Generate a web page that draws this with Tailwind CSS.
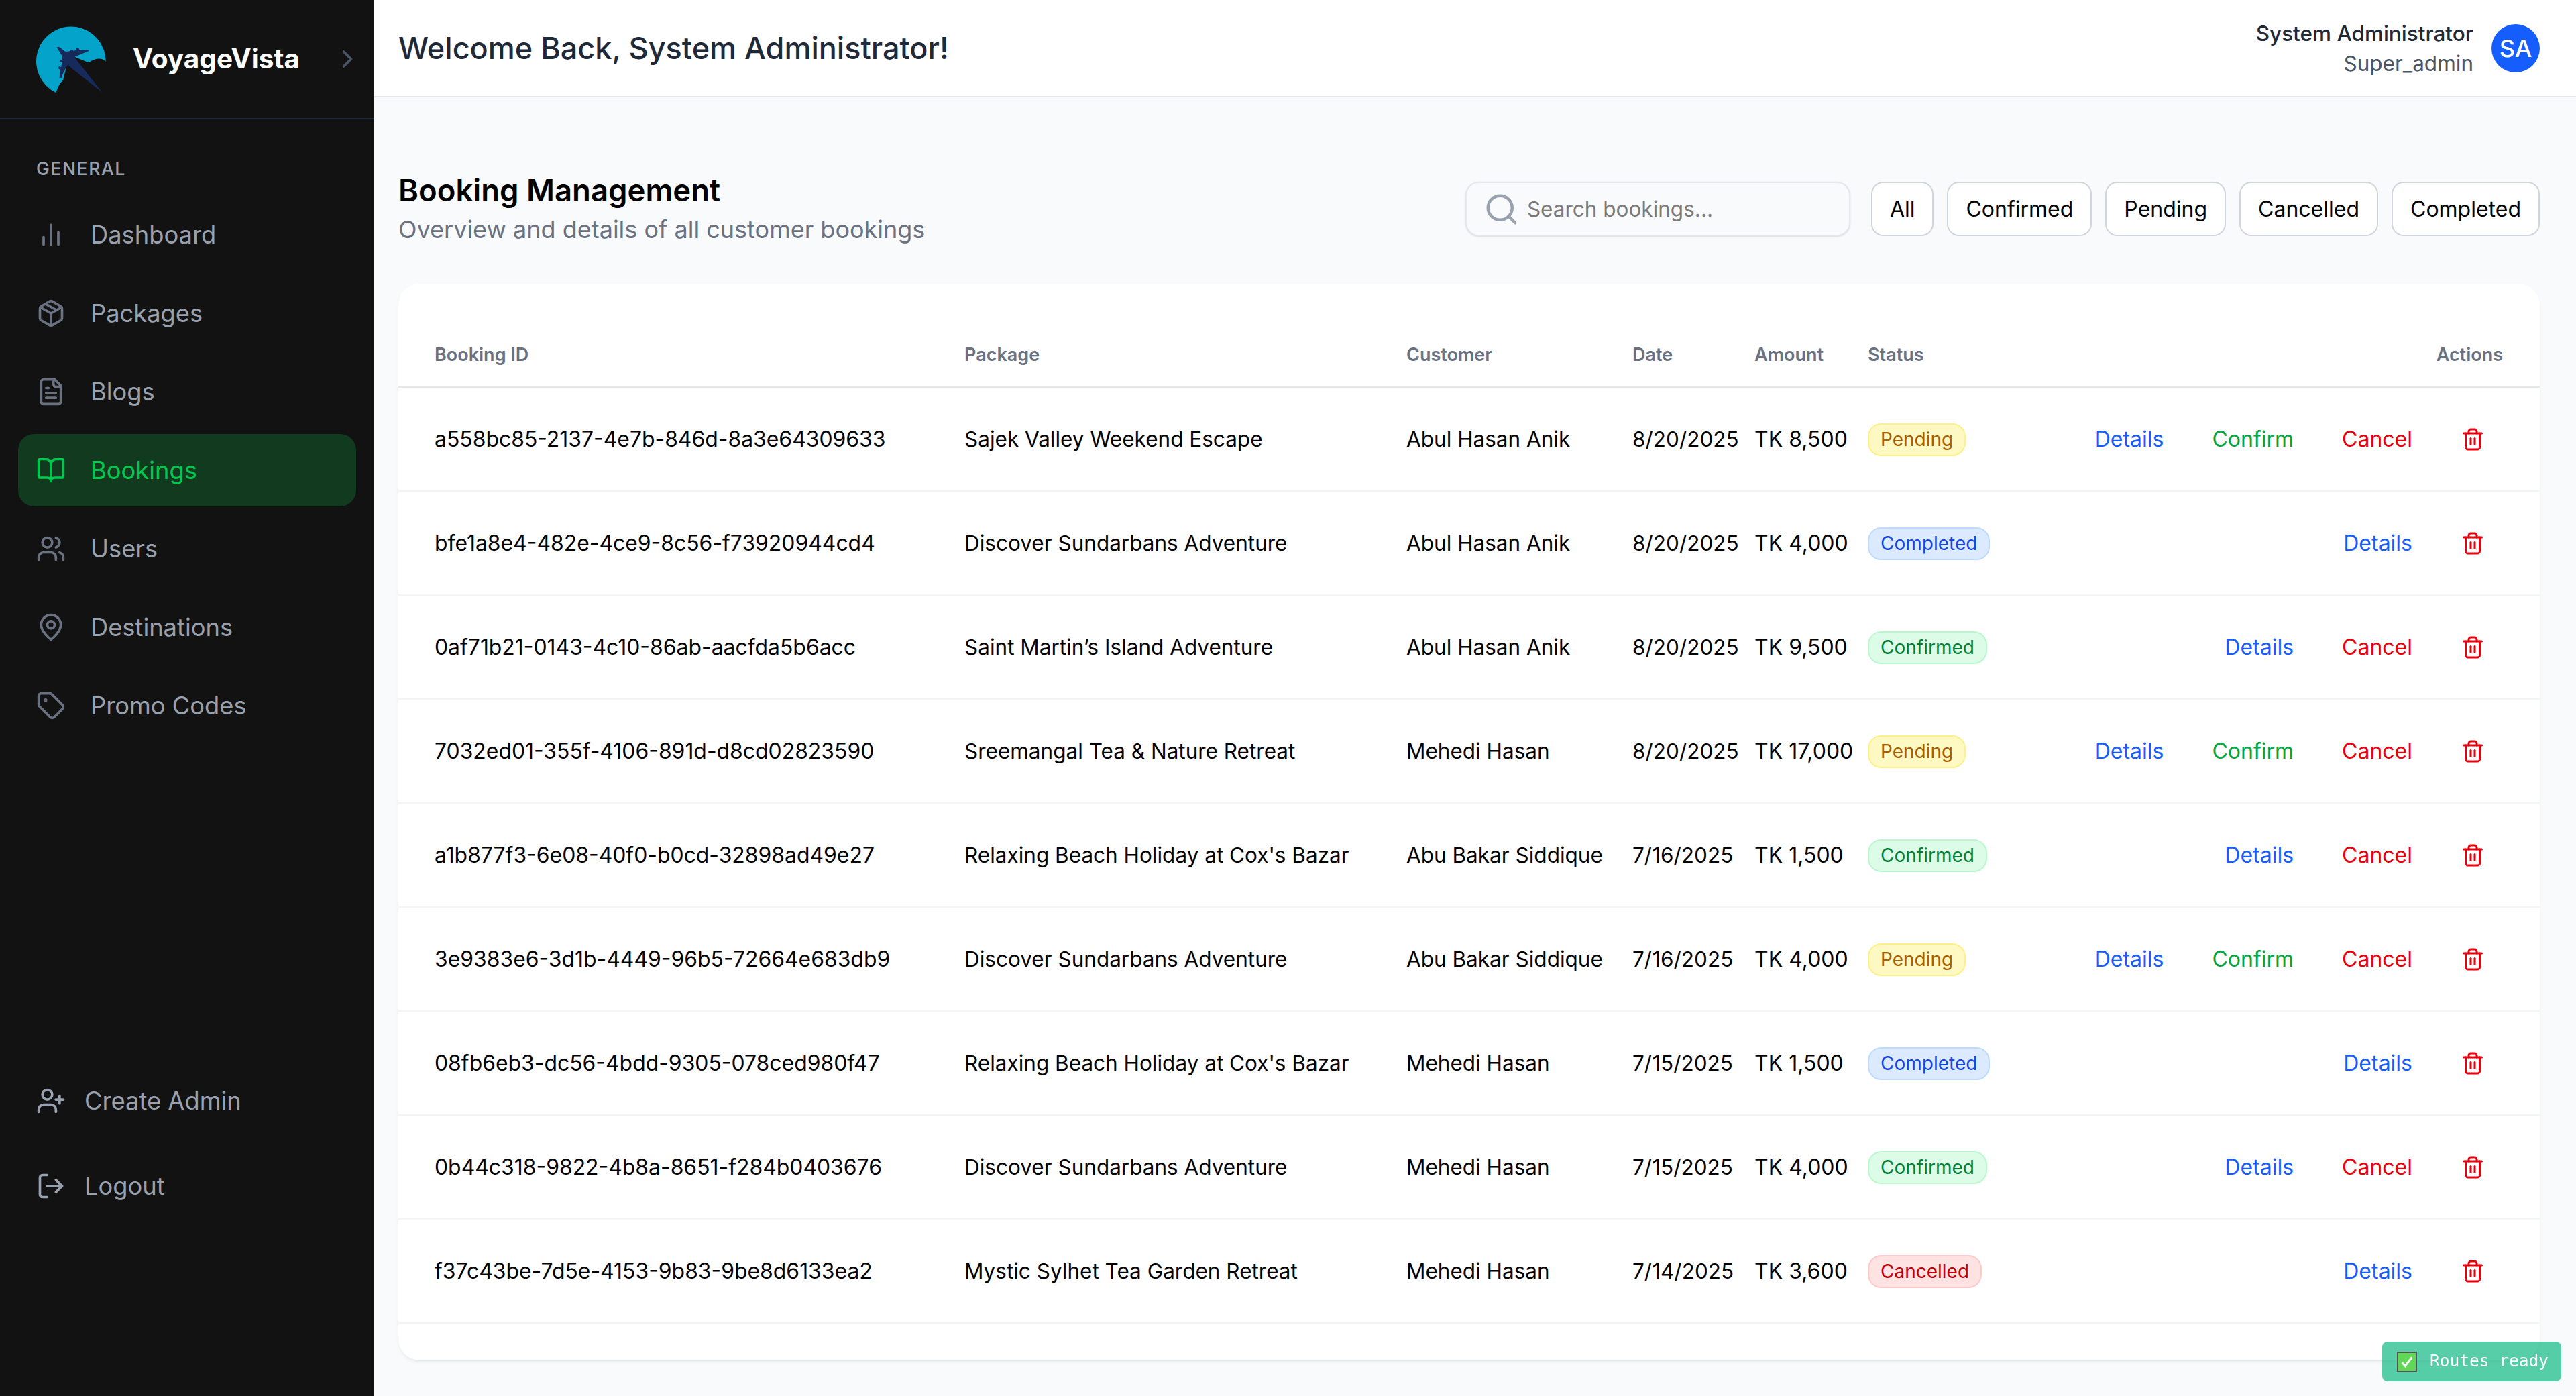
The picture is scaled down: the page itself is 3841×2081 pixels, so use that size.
<!DOCTYPE html>
<html lang="en">
<head>
    <meta charset="UTF-8">
    <title>VoyageVista - Bookings</title>
    <script src="https://cdn.jsdelivr.net/npm/@tailwindcss/browser@4"></script>
</head>
<body class="bg-[#f9fafb] font-['Inter',sans-serif] text-black">
    <svg class="hidden">
        <symbol id="trash" viewBox="0 0 24 24" fill="none" stroke="currentColor" stroke-width="2" stroke-linecap="round" stroke-linejoin="round">
            <path d="M3 6h18"/><path d="M19 6v14c0 1-1 2-2 2H7c-1 0-2-1-2-2V6"/><path d="M8 6V4c0-1 1-2 2-2h4c1 0 2 1 2 2v2"/><path d="M10 11v6"/><path d="M14 11v6"/>
        </symbol>
    </svg>

    <div class="flex h-screen w-full overflow-hidden">
        <!-- Sidebar -->
        <aside class="flex w-[558px] shrink-0 flex-col bg-[#121212]">
            <div class="flex h-[178px] shrink-0 items-center border-b-2 border-[#1e293b] pl-[52px] pr-[18px]">
                <svg class="h-[105px] w-[108px] shrink-0" viewBox="95 65 325 315">
                    <path fill="#04a3c9" d="M190 372A156 156 0 1 1 413 232Q385 205 335 237L270 210L240 240L222 315Q200 335 190 372Z"/>
                    <path fill="#162a5c" d="M193 168L203 166L232 188L255 186L252 179L262 178L268 184L283 181L281 172L291 172L296 180L335 180L338 184L272 212L397 371L242 248L220 288L215 305L205 306L208 270L200 262L203 254L213 258L217 235L206 232L209 224L217 224L216 205Z"/>
                </svg>
                <span class="ml-[38px] text-[40.5px] font-bold leading-none text-white">VoyageVista</span>
                <svg class="ml-auto h-[44px] w-[44px] text-[#4b5563]" viewBox="0 0 24 24" fill="none" stroke="currentColor" stroke-width="2" stroke-linecap="round" stroke-linejoin="round"><path d="m9 18 6-6-6-6"/></svg>
            </div>

            <div class="flex flex-1 flex-col px-[27px] pt-[53px] pb-[259px]">
                <p class="mb-[25px] h-[40px] pl-[27px] text-[26.5px] font-medium leading-[40px] tracking-[0.06em] text-[#99a1af]">GENERAL</p>
                <nav class="flex flex-col gap-[9px] text-[36.3px] text-[#99a1af]">
                    <a class="flex h-[108px] items-center gap-[37px] rounded-[24px] pl-[27px]">
                        <svg class="h-[44px] w-[44px] text-[#6a7282]" viewBox="0 0 24 24" fill="none" stroke="currentColor" stroke-width="2" stroke-linecap="round" stroke-linejoin="round"><path d="M18 20V10"/><path d="M12 20V4"/><path d="M6 20v-6"/></svg>
                        Dashboard
                    </a>
                    <a class="flex h-[108px] items-center gap-[37px] rounded-[24px] pl-[27px]">
                        <svg class="h-[44px] w-[44px] text-[#6a7282]" viewBox="0 0 24 24" fill="none" stroke="currentColor" stroke-width="2" stroke-linecap="round" stroke-linejoin="round"><path d="m7.5 4.27 9 5.15"/><path d="M21 8a2 2 0 0 0-1-1.73l-7-4a2 2 0 0 0-2 0l-7 4A2 2 0 0 0 3 8v8a2 2 0 0 0 1 1.73l7 4a2 2 0 0 0 2 0l7-4A2 2 0 0 0 21 16Z"/><path d="m3.3 7 8.7 5 8.7-5"/><path d="M12 22V12"/></svg>
                        Packages
                    </a>
                    <a class="flex h-[108px] items-center gap-[37px] rounded-[24px] pl-[27px]">
                        <svg class="h-[44px] w-[44px] text-[#6a7282]" viewBox="0 0 24 24" fill="none" stroke="currentColor" stroke-width="2" stroke-linecap="round" stroke-linejoin="round"><path d="M15 2H6a2 2 0 0 0-2 2v16a2 2 0 0 0 2 2h12a2 2 0 0 0 2-2V7Z"/><path d="M14 2v4a2 2 0 0 0 2 2h4"/><path d="M10 9H8"/><path d="M16 13H8"/><path d="M16 17H8"/></svg>
                        Blogs
                    </a>
                    <a class="flex h-[108px] items-center gap-[37px] rounded-[24px] bg-[#113a1f] pl-[27px] text-[#00c950]">
                        <svg class="h-[44px] w-[44px]" viewBox="0 0 24 24" fill="none" stroke="currentColor" stroke-width="2" stroke-linecap="round" stroke-linejoin="round"><path d="M12 7v14"/><path d="M3 18a1 1 0 0 1-1-1V4a1 1 0 0 1 1-1h5a4 4 0 0 1 4 4 4 4 0 0 1 4-4h5a1 1 0 0 1 1 1v13a1 1 0 0 1-1 1h-6a3 3 0 0 0-3 3 3 3 0 0 0-3-3z"/></svg>
                        Bookings
                    </a>
                    <a class="flex h-[108px] items-center gap-[37px] rounded-[24px] pl-[27px]">
                        <svg class="h-[44px] w-[44px] text-[#6a7282]" viewBox="0 0 24 24" fill="none" stroke="currentColor" stroke-width="2" stroke-linecap="round" stroke-linejoin="round"><path d="M16 21v-2a4 4 0 0 0-4-4H6a4 4 0 0 0-4 4v2"/><circle cx="9" cy="7" r="4"/><path d="M22 21v-2a4 4 0 0 0-3-3.87"/><path d="M16 3.13a4 4 0 0 1 0 7.75"/></svg>
                        Users
                    </a>
                    <a class="flex h-[108px] items-center gap-[37px] rounded-[24px] pl-[27px]">
                        <svg class="h-[44px] w-[44px] text-[#6a7282]" viewBox="0 0 24 24" fill="none" stroke="currentColor" stroke-width="2" stroke-linecap="round" stroke-linejoin="round"><path d="M20 10c0 6-8 12-8 12s-8-6-8-12a8 8 0 0 1 16 0Z"/><circle cx="12" cy="10" r="3"/></svg>
                        Destinations
                    </a>
                    <a class="flex h-[108px] items-center gap-[37px] rounded-[24px] pl-[27px]">
                        <svg class="h-[44px] w-[44px] text-[#6a7282]" viewBox="0 0 24 24" fill="none" stroke="currentColor" stroke-width="2" stroke-linecap="round" stroke-linejoin="round"><path d="M12.586 2.586A2 2 0 0 0 11.172 2H4a2 2 0 0 0-2 2v7.172a2 2 0 0 0 .586 1.414l8.704 8.704a2.426 2.426 0 0 0 3.42 0l6.58-6.58a2.426 2.426 0 0 0 0-3.42z"/><circle cx="7.5" cy="7.5" r=".5" fill="currentColor"/></svg>
                        Promo Codes
                    </a>
                </nav>

                <div class="mt-auto flex flex-col gap-[19px] text-[36.3px] text-[#99a1af]">
                    <a class="flex h-[108px] items-center gap-[28px] pl-[27px]">
                        <svg class="h-[44px] w-[44px]" viewBox="0 0 24 24" fill="none" stroke="currentColor" stroke-width="2" stroke-linecap="round" stroke-linejoin="round"><path d="M16 21v-2a4 4 0 0 0-4-4H6a4 4 0 0 0-4 4v2"/><circle cx="9" cy="7" r="4"/><path d="M19 8v6"/><path d="M22 11h-6"/></svg>
                        Create Admin
                    </a>
                    <a class="flex h-[108px] items-center gap-[28px] pl-[27px]">
                        <svg class="h-[44px] w-[44px]" viewBox="0 0 24 24" fill="none" stroke="currentColor" stroke-width="2" stroke-linecap="round" stroke-linejoin="round"><path d="M9 21H5a2 2 0 0 1-2-2V5a2 2 0 0 1 2-2h4"/><path d="m16 17 5-5-5-5"/><path d="M21 12H9"/></svg>
                        Logout
                    </a>
                </div>
            </div>
        </aside>

        <!-- Main -->
        <div class="flex min-w-0 flex-1 flex-col">
            <header class="flex h-[145px] shrink-0 items-center justify-between border-b-2 border-[#e5e7eb] bg-white pl-[36px] pr-[54px]">
                <h1 class="text-[45px] font-medium text-[#1e2939]">Welcome Back, System Administrator!</h1>
                <div class="flex items-center gap-[27px]">
                    <div class="text-right text-[31.5px] leading-[45px]">
                        <p class="font-medium text-[#1e2939]">System Administrator</p>
                        <p class="text-[#4a5565]">Super_admin</p>
                    </div>
                    <div class="flex h-[72px] w-[72px] items-center justify-center rounded-full bg-[#155dfc] text-[36px] font-medium text-white">SA</div>
                </div>
            </header>

            <main class="flex-1 pl-[36px] pr-[54px] pt-[108px]">
                <div class="mb-[53px] flex h-[117px] items-center justify-between">
                    <div>
                        <h2 class="text-[45.5px] font-semibold leading-[60px]">Booking Management</h2>
                        <p class="text-[36px] leading-[56px] text-[#6a7282]">Overview and details of all customer bookings</p>
                    </div>
                    <div class="flex items-center gap-[20px] text-[32px]">
                        <div class="mr-[11px] flex h-[81px] w-[574px] items-center gap-[11px] rounded-[20px] border-2 border-[#e5e7eb] bg-[#f9fafb] pl-[25px] text-[31.5px] text-[#7a7a7a] shadow-sm">
                            <svg class="h-[54px] w-[54px] text-[#99a1af]" viewBox="0 0 24 24" fill="none" stroke="currentColor" stroke-width="2" stroke-linecap="round" stroke-linejoin="round"><circle cx="11" cy="11" r="8"/><path d="m21 21-4.3-4.3"/></svg>
                            Search bookings...
                        </div>
                        <button class="h-[81px] rounded-[18px] border-2 border-[#d1d5dc] bg-white px-[26px]">All</button>
                        <button class="h-[81px] rounded-[18px] border-2 border-[#d1d5dc] bg-white px-[26px]">Confirmed</button>
                        <button class="h-[81px] rounded-[18px] border-2 border-[#d1d5dc] bg-white px-[26px]">Pending</button>
                        <button class="h-[81px] rounded-[18px] border-2 border-[#d1d5dc] bg-white px-[26px]">Cancelled</button>
                        <button class="h-[81px] rounded-[18px] border-2 border-[#d1d5dc] bg-white px-[26px]">Completed</button>
                    </div>
                </div>

                <div class="rounded-[32px] bg-white pt-[55px] pb-[55px] shadow-md shadow-black/5">
                    <table class="w-full table-fixed text-left text-[31.5px]">
                        <colgroup>
                            <col class="w-[844px]"><col class="w-[659px]"><col class="w-[337px]"><col class="w-[182px]"><col class="w-[169px]"><col class="w-[220px]"><col>
                        </colgroup>
                        <thead>
                            <tr class="h-[99px] border-b-2 border-[#e5e7eb] text-[27px] text-[#6a7282]">
                                <th class="pl-[54px] pt-[5px] font-semibold">Booking ID</th>
                                <th class="pt-[5px] font-semibold">Package</th>
                                <th class="pt-[5px] font-semibold">Customer</th>
                                <th class="pt-[5px] font-semibold">Date</th>
                                <th class="pt-[5px] font-semibold">Amount</th>
                                <th class="pt-[5px] font-semibold">Status</th>
                                <th class="pr-[55px] pt-[5px] text-right font-semibold">Actions</th>
                            </tr>
                        </thead>
                        <tbody>
                            <tr class="h-[155px] border-b-2 border-[#f3f4f6]">
                                <td class="pl-[54px] text-[31.9px]">a558bc85-2137-4e7b-846d-8a3e64309633</td>
                                <td>Sajek Valley Weekend Escape</td>
                                <td>Abul Hasan Anik</td>
                                <td>8/20/2025</td>
                                <td class="text-[32px]">TK 8,500</td>
                                <td><span class="inline-block rounded-[20px] border-2 border-[#fff085] bg-[#fef9c2] px-[17px] py-[2px] text-[28px] leading-[41px] text-[#a65f00]">Pending</span></td>
                                <td class="pr-[82px] text-[32px]"><div class="flex items-center justify-end gap-[72px]"><a class="text-[#155dfc]">Details</a><a class="text-[#00a63e]">Confirm</a><a class="text-[#e7000b]">Cancel</a><svg class="h-[36px] w-[36px] text-[#e7000b]"><use href="#trash"/></svg></div></td>
                            </tr>
                            <tr class="h-[155px] border-b-2 border-[#f3f4f6]">
                                <td class="pl-[54px] text-[31.9px]">bfe1a8e4-482e-4ce9-8c56-f73920944cd4</td>
                                <td>Discover Sundarbans Adventure</td>
                                <td>Abul Hasan Anik</td>
                                <td>8/20/2025</td>
                                <td class="text-[32px]">TK 4,000</td>
                                <td><span class="inline-block rounded-[20px] border-2 border-[#bedbff] bg-[#dbeafe] px-[17px] py-[2px] text-[28px] leading-[41px] text-[#1447e6]">Completed</span></td>
                                <td class="pr-[82px] text-[32px]"><div class="flex items-center justify-end gap-[72px]"><a class="text-[#155dfc]">Details</a><svg class="h-[36px] w-[36px] text-[#e7000b]"><use href="#trash"/></svg></div></td>
                            </tr>
                            <tr class="h-[155px] border-b-2 border-[#f3f4f6]">
                                <td class="pl-[54px] text-[31.9px]">0af71b21-0143-4c10-86ab-aacfda5b6acc</td>
                                <td>Saint Martin’s Island Adventure</td>
                                <td>Abul Hasan Anik</td>
                                <td>8/20/2025</td>
                                <td class="text-[32px]">TK 9,500</td>
                                <td><span class="inline-block rounded-[20px] border-2 border-[#b9f8cf] bg-[#dcfce7] px-[17px] py-[2px] text-[28px] leading-[41px] text-[#008236]">Confirmed</span></td>
                                <td class="pr-[82px] text-[32px]"><div class="flex items-center justify-end gap-[72px]"><a class="text-[#155dfc]">Details</a><a class="text-[#e7000b]">Cancel</a><svg class="h-[36px] w-[36px] text-[#e7000b]"><use href="#trash"/></svg></div></td>
                            </tr>
                            <tr class="h-[155px] border-b-2 border-[#f3f4f6]">
                                <td class="pl-[54px] text-[31.9px]">7032ed01-355f-4106-891d-d8cd02823590</td>
                                <td>Sreemangal Tea &amp; Nature Retreat</td>
                                <td>Mehedi Hasan</td>
                                <td>8/20/2025</td>
                                <td class="text-[32px]">TK 17,000</td>
                                <td><span class="inline-block rounded-[20px] border-2 border-[#fff085] bg-[#fef9c2] px-[17px] py-[2px] text-[28px] leading-[41px] text-[#a65f00]">Pending</span></td>
                                <td class="pr-[82px] text-[32px]"><div class="flex items-center justify-end gap-[72px]"><a class="text-[#155dfc]">Details</a><a class="text-[#00a63e]">Confirm</a><a class="text-[#e7000b]">Cancel</a><svg class="h-[36px] w-[36px] text-[#e7000b]"><use href="#trash"/></svg></div></td>
                            </tr>
                            <tr class="h-[155px] border-b-2 border-[#f3f4f6]">
                                <td class="pl-[54px] text-[31.9px]">a1b877f3-6e08-40f0-b0cd-32898ad49e27</td>
                                <td>Relaxing Beach Holiday at Cox's Bazar</td>
                                <td>Abu Bakar Siddique</td>
                                <td>7/16/2025</td>
                                <td class="text-[32px]">TK 1,500</td>
                                <td><span class="inline-block rounded-[20px] border-2 border-[#b9f8cf] bg-[#dcfce7] px-[17px] py-[2px] text-[28px] leading-[41px] text-[#008236]">Confirmed</span></td>
                                <td class="pr-[82px] text-[32px]"><div class="flex items-center justify-end gap-[72px]"><a class="text-[#155dfc]">Details</a><a class="text-[#e7000b]">Cancel</a><svg class="h-[36px] w-[36px] text-[#e7000b]"><use href="#trash"/></svg></div></td>
                            </tr>
                            <tr class="h-[155px] border-b-2 border-[#f3f4f6]">
                                <td class="pl-[54px] text-[31.9px]">3e9383e6-3d1b-4449-96b5-72664e683db9</td>
                                <td>Discover Sundarbans Adventure</td>
                                <td>Abu Bakar Siddique</td>
                                <td>7/16/2025</td>
                                <td class="text-[32px]">TK 4,000</td>
                                <td><span class="inline-block rounded-[20px] border-2 border-[#fff085] bg-[#fef9c2] px-[17px] py-[2px] text-[28px] leading-[41px] text-[#a65f00]">Pending</span></td>
                                <td class="pr-[82px] text-[32px]"><div class="flex items-center justify-end gap-[72px]"><a class="text-[#155dfc]">Details</a><a class="text-[#00a63e]">Confirm</a><a class="text-[#e7000b]">Cancel</a><svg class="h-[36px] w-[36px] text-[#e7000b]"><use href="#trash"/></svg></div></td>
                            </tr>
                            <tr class="h-[155px] border-b-2 border-[#f3f4f6]">
                                <td class="pl-[54px] text-[31.9px]">08fb6eb3-dc56-4bdd-9305-078ced980f47</td>
                                <td>Relaxing Beach Holiday at Cox's Bazar</td>
                                <td>Mehedi Hasan</td>
                                <td>7/15/2025</td>
                                <td class="text-[32px]">TK 1,500</td>
                                <td><span class="inline-block rounded-[20px] border-2 border-[#bedbff] bg-[#dbeafe] px-[17px] py-[2px] text-[28px] leading-[41px] text-[#1447e6]">Completed</span></td>
                                <td class="pr-[82px] text-[32px]"><div class="flex items-center justify-end gap-[72px]"><a class="text-[#155dfc]">Details</a><svg class="h-[36px] w-[36px] text-[#e7000b]"><use href="#trash"/></svg></div></td>
                            </tr>
                            <tr class="h-[155px] border-b-2 border-[#f3f4f6]">
                                <td class="pl-[54px] text-[31.9px]">0b44c318-9822-4b8a-8651-f284b0403676</td>
                                <td>Discover Sundarbans Adventure</td>
                                <td>Mehedi Hasan</td>
                                <td>7/15/2025</td>
                                <td class="text-[32px]">TK 4,000</td>
                                <td><span class="inline-block rounded-[20px] border-2 border-[#b9f8cf] bg-[#dcfce7] px-[17px] py-[2px] text-[28px] leading-[41px] text-[#008236]">Confirmed</span></td>
                                <td class="pr-[82px] text-[32px]"><div class="flex items-center justify-end gap-[72px]"><a class="text-[#155dfc]">Details</a><a class="text-[#e7000b]">Cancel</a><svg class="h-[36px] w-[36px] text-[#e7000b]"><use href="#trash"/></svg></div></td>
                            </tr>
                            <tr class="h-[155px] border-b-2 border-[#f3f4f6]">
                                <td class="pl-[54px] text-[31.9px]">f37c43be-7d5e-4153-9b83-9be8d6133ea2</td>
                                <td>Mystic Sylhet Tea Garden Retreat</td>
                                <td>Mehedi Hasan</td>
                                <td>7/14/2025</td>
                                <td class="text-[32px]">TK 3,600</td>
                                <td><span class="inline-block rounded-[20px] border-2 border-[#ffc9c9] bg-[#ffe2e2] px-[17px] py-[2px] text-[28px] leading-[41px] text-[#c10007]">Cancelled</span></td>
                                <td class="pr-[82px] text-[32px]"><div class="flex items-center justify-end gap-[72px]"><a class="text-[#155dfc]">Details</a><svg class="h-[36px] w-[36px] text-[#e7000b]"><use href="#trash"/></svg></div></td>
                            </tr>
                        </tbody>
                    </table>
                </div>
            </main>
        </div>
    </div>

    <!-- Dev toast -->
    <div class="fixed bottom-[22px] right-[22px] flex h-[59px] w-[267px] items-center gap-[19px] rounded-[8px] bg-[#10b981]/70 pl-[22px] font-['DejaVu_Sans_Mono',monospace] text-[24.5px] text-white">
        <span class="flex h-[30px] w-[30px] items-center justify-center border-2 border-[#555555] bg-[#5fd855]">
            <svg class="h-[22px] w-[22px]" viewBox="0 0 24 24" fill="none" stroke="white" stroke-width="3.5"><path d="m4 13 5 6 11-14"/></svg>
        </span>
        Routes ready
    </div>
</body>
</html>
